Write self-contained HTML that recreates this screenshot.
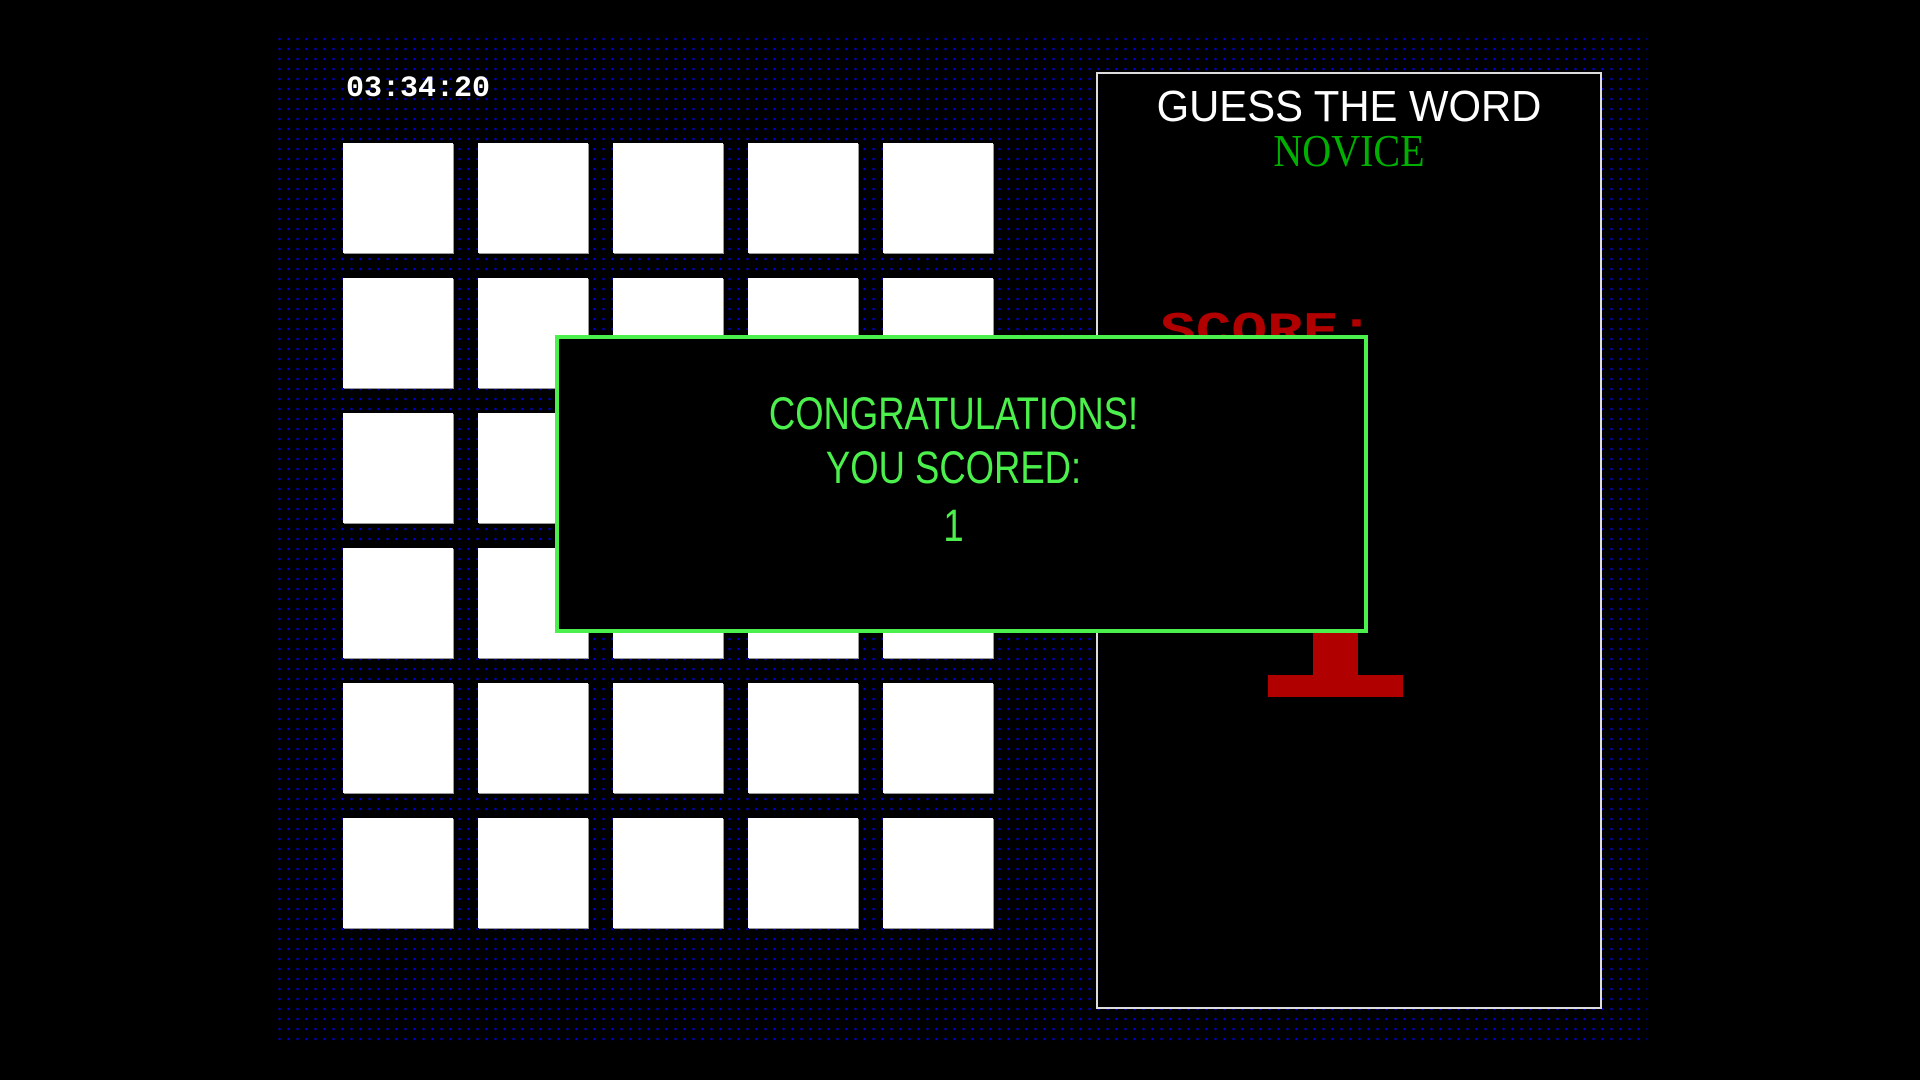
<!DOCTYPE html>
<html><head><meta charset="utf-8"><style>
html,body{margin:0;padding:0;background:#000;width:1920px;height:1080px;overflow:hidden;position:relative}
.bg{position:absolute;left:275px;top:34px;width:1372px;height:1013px;background-color:#000;background-image:radial-gradient(circle,#0000c8 0 1.1px,transparent 1.4px);background-size:9px 10px}
.cell{position:absolute;width:110px;height:110px;background:#fff;box-shadow:1px 1px 0 #999}
.timer{position:absolute;left:346px;top:72px;font:bold 30px "Liberation Mono",monospace;color:#fff}
.panel{position:absolute;left:1096px;top:72px;width:502px;height:933px;border:2px solid #ddd;background:#000}
.title{position:absolute;left:0;width:100%;top:8px;text-align:center;font:44px "Liberation Sans",sans-serif;color:#fff;transform:scaleX(0.95)}
.nov{position:absolute;left:0;width:100%;top:50px;text-align:center;font:46px "Liberation Serif",serif;color:#00b000;transform:scaleX(0.87)}
.score{position:absolute;left:62px;top:232px;font:bold 48px "Liberation Mono",monospace;color:#b00000;transform:scaleX(1.24);transform-origin:left}
.red{position:absolute;background:#b00000}
.modal{position:absolute;left:555px;top:335px;width:805px;height:290px;border:4px solid #4cf04c;background:#000}
.mt{position:absolute;left:-8px;width:100%;text-align:center;font:45px "Liberation Sans",sans-serif;color:#4cf04c;transform:scaleX(0.81)}
</style></head><body>
<div class="bg"></div>
<div class="timer">03:34:20</div>
<div class="cell" style="left:343px;top:143px"></div><div class="cell" style="left:478px;top:143px"></div><div class="cell" style="left:613px;top:143px"></div><div class="cell" style="left:748px;top:143px"></div><div class="cell" style="left:883px;top:143px"></div>
<div class="cell" style="left:343px;top:278px"></div><div class="cell" style="left:478px;top:278px"></div><div class="cell" style="left:613px;top:278px"></div><div class="cell" style="left:748px;top:278px"></div><div class="cell" style="left:883px;top:278px"></div>
<div class="cell" style="left:343px;top:413px"></div><div class="cell" style="left:478px;top:413px"></div><div class="cell" style="left:613px;top:413px"></div><div class="cell" style="left:748px;top:413px"></div><div class="cell" style="left:883px;top:413px"></div>
<div class="cell" style="left:343px;top:548px"></div><div class="cell" style="left:478px;top:548px"></div><div class="cell" style="left:613px;top:548px"></div><div class="cell" style="left:748px;top:548px"></div><div class="cell" style="left:883px;top:548px"></div>
<div class="cell" style="left:343px;top:683px"></div><div class="cell" style="left:478px;top:683px"></div><div class="cell" style="left:613px;top:683px"></div><div class="cell" style="left:748px;top:683px"></div><div class="cell" style="left:883px;top:683px"></div>
<div class="cell" style="left:343px;top:818px"></div><div class="cell" style="left:478px;top:818px"></div><div class="cell" style="left:613px;top:818px"></div><div class="cell" style="left:748px;top:818px"></div><div class="cell" style="left:883px;top:818px"></div>
<div class="panel">
<div class="title">GUESS THE WORD</div>
<div class="nov">NOVICE</div>
<div class="score">SCORE:</div>
</div>
<div class="red" style="left:1313px;top:630px;width:45px;height:46px"></div>
<div class="red" style="left:1268px;top:675px;width:135px;height:22px"></div>
<div class="modal">
<div class="mt" style="top:49px">CONGRATULATIONS!</div>
<div class="mt" style="top:103px">YOU SCORED:</div>
<div class="mt" style="top:161px">1</div>
</div>
</body></html>
